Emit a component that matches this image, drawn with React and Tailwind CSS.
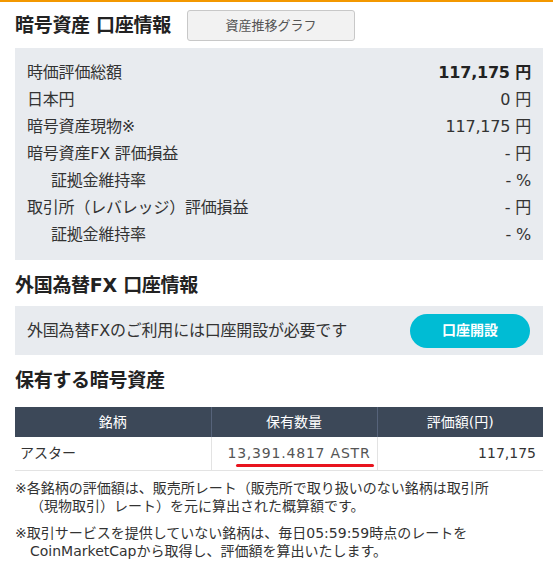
import React from "react";

const rows = [
  { label: "時価評価総額", value: "117,175", unit: "円", bold: true },
  { label: "日本円", value: "0", unit: "円" },
  { label: "暗号資産現物※", value: "117,175", unit: "円" },
  { label: "暗号資産FX 評価損益", value: "-", unit: "円" },
  { label: "証拠金維持率", value: "-", unit: "%", indent: true },
  { label: "取引所（レバレッジ）評価損益", value: "-", unit: "円" },
  { label: "証拠金維持率", value: "-", unit: "%", indent: true },
];

const App = () => {
  return (
    <div
      className="w-[553px] h-[564px] bg-white border-t-[2px] border-[#f39800] text-[#333] overflow-hidden"
      style={{ fontFamily: '"DejaVu Sans", "Noto Sans CJK JP", sans-serif' }}
    >
      <div className="pl-[15px] pr-[10px]">
        {/* 暗号資産 口座情報 */}
        <div className="flex items-center h-[46px] pt-[1px]">
          <h2 className="text-[19px] font-bold text-[#222] tracking-[-0.3px]">暗号資産 口座情報</h2>
          <button className="ml-[16px] w-[168px] h-[31px] bg-[#f2f2f2] border border-[#c8c8c8] rounded-[3px] text-[13px] text-[#555]">
            資産推移グラフ
          </button>
        </div>
        <div className="bg-[#e8ebef] pl-[12px] pr-[12px] pt-[11px] pb-[12px]">
          {rows.map((row, i) => (
            <div key={i} className="flex justify-between items-center h-[27px] text-[16px] tracking-[-0.2px]">
              <span className={row.indent ? "pl-[24px]" : ""}>{row.label}</span>
              <span className={row.bold ? "font-bold text-[#222]" : ""}>
                {row.value} {row.unit}
              </span>
            </div>
          ))}
        </div>

        {/* 外国為替FX 口座情報 */}
        <h2 className="text-[19px] font-bold text-[#222] h-[46px] pt-[4px] flex items-center tracking-[-0.3px]">
          外国為替FX 口座情報
        </h2>
        <div className="bg-[#e8ebef] h-[49px] flex items-center justify-between pl-[12px] pr-[13px]">
          <span className="text-[16px] tracking-[-0.2px]">外国為替FXのご利用には口座開設が必要です</span>
          <button className="w-[120px] h-[34px] rounded-full bg-[#00bcd4] text-white text-[14px] font-bold">
            口座開設
          </button>
        </div>

        {/* 保有する暗号資産 */}
        <h2 className="text-[19px] font-bold text-[#222] h-[52px] pb-[2px] flex items-center tracking-[-0.3px]">
          保有する暗号資産
        </h2>
        <table className="w-full border-collapse text-[14px]">
          <thead>
            <tr className="bg-[#3c4858] text-white h-[30px]">
              <th className="w-[196px] font-normal border-r border-[#56637a]">銘柄</th>
              <th className="w-[166px] font-normal border-r border-[#56637a]">保有数量</th>
              <th className="font-normal">評価額(円)</th>
            </tr>
          </thead>
          <tbody>
            <tr className="h-[33px] border-b border-[#e3e3e3]">
              <td className="pl-[5px] border-r border-[#e3e3e3]">アスター</td>
              <td className="relative text-right pr-[6px] border-r border-[#e3e3e3] text-[#555] tracking-[0.8px]">
                13,391.4817 ASTR
                <div className="absolute left-[24px] right-[3px] bottom-[3px] h-[3px] rounded-full bg-[#e8141e]" />
              </td>
              <td className="text-right pr-[7px]">117,175</td>
            </tr>
          </tbody>
        </table>

        {/* 注記 */}
        <div className="mt-[8px] w-[486px] text-[14px] leading-[18px] text-[#333]">
          <p className="pl-[15px] -indent-[15px]">
            ※各銘柄の評価額は、販売所レート（販売所で取り扱いのない銘柄は取引所（現物取引）レート）を元に算出された概算額です。
          </p>
          <p className="mt-[9px] pl-[15px] -indent-[15px]">
            ※取引サービスを提供していない銘柄は、毎日05:59:59時点のレートをCoinMarketCapから取得し、評価額を算出いたします。
          </p>
        </div>
      </div>
    </div>
  );
};

export default App;
